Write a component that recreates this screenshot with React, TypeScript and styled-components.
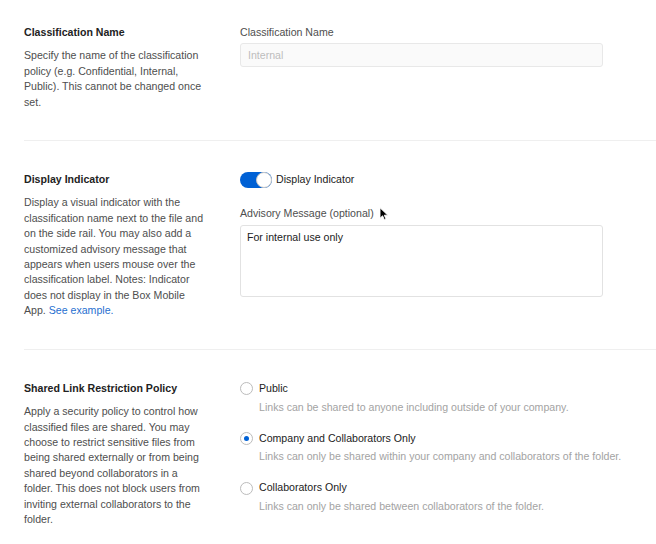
import React from 'react'
import styled, { createGlobalStyle } from 'styled-components'

const GlobalStyle = createGlobalStyle`
  html, body {
    margin: 0;
    padding: 0;
    background: #fff;
  }
  body {
    font-family: 'Liberation Sans', Arial, Helvetica, sans-serif;
    font-size: 10.6px;
    line-height: 15.4px;
    color: #222;
    -webkit-font-smoothing: antialiased;
  }
`

const options = [
  {
    id: 'public',
    label: 'Public',
    description: 'Links can be shared to anyone including outside of your company.',
  },
  {
    id: 'company',
    label: 'Company and Collaborators Only',
    description: 'Links can only be shared within your company and collaborators of the folder.',
  },
  {
    id: 'collaborators',
    label: 'Collaborators Only',
    description: 'Links can only be shared between collaborators of the folder.',
  },
]

const Cursor = () => (
  <CursorIcon width="10" height="14" viewBox="0 0 10 14">
    <path
      d="M1 0.8 L1 11.2 L3.6 8.8 L5.4 12.8 L7 12.1 L5.3 8.2 L8.8 8.2 Z"
      fill="#000"
      stroke="#fff"
      strokeWidth="0.9"
      strokeLinejoin="round"
    />
  </CursorIcon>
)

export default function App(): JSX.Element {
  const selected = 'company'

  return (
    <Page>
      <GlobalStyle />

      <Section>
        <Info>
          <Title>Classification Name</Title>
          <Description>
            Specify the name of the classification policy (e.g. Confidential, Internal,
            Public). This cannot be changed once set.
          </Description>
        </Info>
        <Fields>
          <FieldLabel>Classification Name</FieldLabel>
          <TextInput placeholder="Internal" disabled />
        </Fields>
      </Section>

      <Section>
        <Info>
          <Title>Display Indicator</Title>
          <Description>
            Display a visual indicator with the classification name next to the file and
            on the side rail. You may also add a customized advisory message that appears
            when users mouse over the classification label. Notes: Indicator does not
            display in the Box Mobile App. <Link href="#">See example.</Link>
          </Description>
        </Info>
        <Fields>
          <ToggleRow>
            <Toggle $on>
              <Knob $on />
            </Toggle>
            <ToggleLabel>Display Indicator</ToggleLabel>
          </ToggleRow>
          <AdvisoryLabel>
            Advisory Message (optional)
            <Cursor />
          </AdvisoryLabel>
          <TextArea defaultValue="For internal use only" />
        </Fields>
      </Section>

      <Section>
        <Info>
          <Title>Shared Link Restriction Policy</Title>
          <Description>
            Apply a security policy to control how classified files are shared. You may
            choose to restrict sensitive files from being shared externally or from being
            shared beyond collaborators in a folder. This does not block users from
            inviting external collaborators to the folder.
          </Description>
        </Info>
        <Options>
          {options.map((option) => (
            <Option key={option.id}>
              <OptionRow>
                <Radio $checked={option.id === selected} />
                <OptionLabel>{option.label}</OptionLabel>
              </OptionRow>
              <OptionDescription>{option.description}</OptionDescription>
            </Option>
          ))}
        </Options>
      </Section>
    </Page>
  )
}

const Page = styled.div`
  width: 656px;
  height: 544px;
  overflow: hidden;
  padding-left: 24px;
  box-sizing: border-box;
`

const Section = styled.div`
  display: grid;
  grid-template-columns: 216px 1fr;
  align-items: start;
  padding: 31px 0 30px;
  border-bottom: 1px solid #efefef;

  &:first-child {
    padding-top: 25px;
  }
`

const Info = styled.div`
  width: 184px;
`

const Title = styled.div`
  font-weight: bold;
  color: #222;
`

const Description = styled.div`
  margin-top: 8px;
  color: #4e4e4e;
`

const Link = styled.a`
  color: #1f6fd0;
  text-decoration: none;
`

const Fields = styled.div`
  display: flex;
  flex-direction: column;
  width: 363px;
`

const FieldLabel = styled.div`
  color: #4e4e4e;
  margin-bottom: 3px;
`

const AdvisoryLabel = styled(FieldLabel)`
  position: relative;
  align-self: flex-start;
  margin-top: 18px;
  margin-bottom: 4px;
`

const CursorIcon = styled.svg`
  position: absolute;
  left: calc(100% + 5px);
  top: 1px;
`

const TextInput = styled.input`
  box-sizing: border-box;
  height: 24px;
  padding: 0 7px;
  border: 1px solid #e8e8e8;
  border-radius: 3px;
  background: #fafafa;
  font: inherit;
  color: #222;

  &::placeholder {
    color: #bdbdbd;
  }
`

const TextArea = styled.textarea`
  box-sizing: border-box;
  height: 72px;
  padding: 4px 6px;
  border: 1px solid #e2e2e2;
  border-radius: 3px;
  background: #fff;
  font: inherit;
  line-height: 15.4px;
  color: #222;
  resize: none;
  outline: none;
`

const ToggleRow = styled.div`
  display: flex;
  align-items: center;
  gap: 4px;
  height: 16px;
`

const Toggle = styled.div<{ $on?: boolean }>`
  position: relative;
  width: 32px;
  height: 16px;
  border-radius: 8px;
  background: ${(p) => (p.$on ? '#0061d5' : '#e8e8e8')};
`

const Knob = styled.div<{ $on?: boolean }>`
  position: absolute;
  top: 0;
  left: ${(p) => (p.$on ? '16px' : '0')};
  width: 16px;
  height: 16px;
  box-sizing: border-box;
  border-radius: 50%;
  background: #fff;
  border: 1px solid #c8c8c8;
`

const ToggleLabel = styled.span`
  color: #222;
`

const Options = styled.div`
  display: flex;
  flex-direction: column;
  gap: 15.5px;
`

const Option = styled.div`
  display: flex;
  flex-direction: column;
  gap: 3.5px;
`

const OptionRow = styled.div`
  display: flex;
  align-items: center;
  gap: 6px;
`

const Radio = styled.span<{ $checked?: boolean }>`
  position: relative;
  flex: none;
  width: 13px;
  height: 13px;
  box-sizing: border-box;
  border: 1px solid #bcbcbc;
  border-radius: 50%;
  background: #fff;

  &::after {
    content: '';
    display: ${(p) => (p.$checked ? 'block' : 'none')};
    position: absolute;
    top: 3px;
    left: 3px;
    width: 5px;
    height: 5px;
    border-radius: 50%;
    background: #0061d5;
  }
`

const OptionLabel = styled.span`
  color: #222;
`

const OptionDescription = styled.div`
  padding-left: 19px;
  color: #a3a3a3;
  white-space: nowrap;
`
